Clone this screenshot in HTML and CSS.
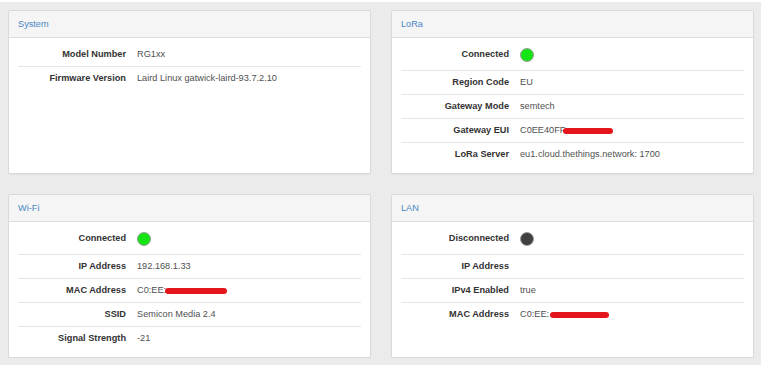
FILE: index.html
```html
<!DOCTYPE html>
<html>
	<head>
		<meta http-equiv="Content-Type" content="text/html; charset=utf-8"/>
		<title>Gateway Status</title>
		<link rel="stylesheet" href="styles.css">
	</head>
	<body>
	<div class="topStrip"></div>
	<div class="grid">
		<div class="panel">
			<div class="panelHead">System</div>
			<div class="panelBody">
				<dl class="row"><dt>Model Number</dt><dd>RG1xx</dd></dl>
				<dl class="row"><dt>Firmware Version</dt><dd>Laird Linux gatwick-laird-93.7.2.10</dd></dl>
			</div>
		</div>
		<div class="panel">
			<div class="panelHead">LoRa</div>
			<div class="panelBody">
				<dl class="row status"><dt>Connected</dt><dd><span class="dot on"></span></dd></dl>
				<dl class="row"><dt>Region Code</dt><dd>EU</dd></dl>
				<dl class="row"><dt>Gateway Mode</dt><dd>semtech</dd></dl>
				<dl class="row"><dt>Gateway EUI</dt><dd>C0EE40FF<span class="redact eui"></span></dd></dl>
				<dl class="row"><dt>LoRa Server</dt><dd>eu1.cloud.thethings.network: 1700</dd></dl>
			</div>
		</div>
		<div class="panel">
			<div class="panelHead">Wi-Fi</div>
			<div class="panelBody">
				<dl class="row status"><dt>Connected</dt><dd><span class="dot on"></span></dd></dl>
				<dl class="row"><dt>IP Address</dt><dd>192.168.1.33</dd></dl>
				<dl class="row"><dt>MAC Address</dt><dd>C0:EE:<span class="redact mac"></span></dd></dl>
				<dl class="row"><dt>SSID</dt><dd>Semicon Media 2.4</dd></dl>
				<dl class="row"><dt>Signal Strength</dt><dd>-21</dd></dl>
			</div>
		</div>
		<div class="panel">
			<div class="panelHead">LAN</div>
			<div class="panelBody">
				<dl class="row status"><dt>Disconnected</dt><dd><span class="dot off"></span></dd></dl>
				<dl class="row"><dt>IP Address</dt><dd></dd></dl>
				<dl class="row"><dt>IPv4 Enabled</dt><dd>true</dd></dl>
				<dl class="row"><dt>MAC Address</dt><dd>C0:EE:<span class="redact mac2"></span></dd></dl>
			</div>
		</div>
	</div>
	</body>
</html>
```

FILE: styles.css
```css
body{padding:0; margin:0; background:#ebebeb; font-family:"Liberation Sans", Arial, sans-serif; font-size:9.2px; color:#333; overflow:hidden;}
.topStrip{height:2px; background:#fff;}
.grid{display:grid; grid-template-columns:1fr 1fr; column-gap:20px; row-gap:20px; padding:8px 7px 0 8px;}
.panel{background:#fff; border:1px solid #d9d9d9; border-radius:2px; box-shadow:0 1px 1px rgba(0,0,0,.04);}
.panelHead{height:26px; line-height:26px; padding:0 9px; background:#f5f5f5; border-bottom:1px solid #dedede; color:#4a86c4;}
.panelBody{padding:5px 9px 7px 9px; min-height:123px;}
.row{display:grid; grid-template-columns:108px 1fr; column-gap:11px; margin:0; padding:3px 0; line-height:17px; border-bottom:1px solid #e6e6e6;}
.row:last-child{border-bottom:none;}
.row.status{padding-bottom:7px;}
.row dt{font-weight:bold; text-align:right; color:#333;}
.row dd{margin:0; color:#505050; display:flex; align-items:center; min-height:17px;}
.dot{display:inline-block; width:12px; height:12px; border-radius:50%; border:1px solid #9a9a9a;}
.dot.on{background:#15e515;}
.dot.off{background:#404040;}
.redact{display:inline-block; height:6px; border-radius:3px; background:#e3161b;}
.redact.eui{width:50px; margin-left:-2px;}
.redact.mac{width:62px; margin-left:-1px;}
.redact.mac2{width:59px; margin-left:1px;}
```
